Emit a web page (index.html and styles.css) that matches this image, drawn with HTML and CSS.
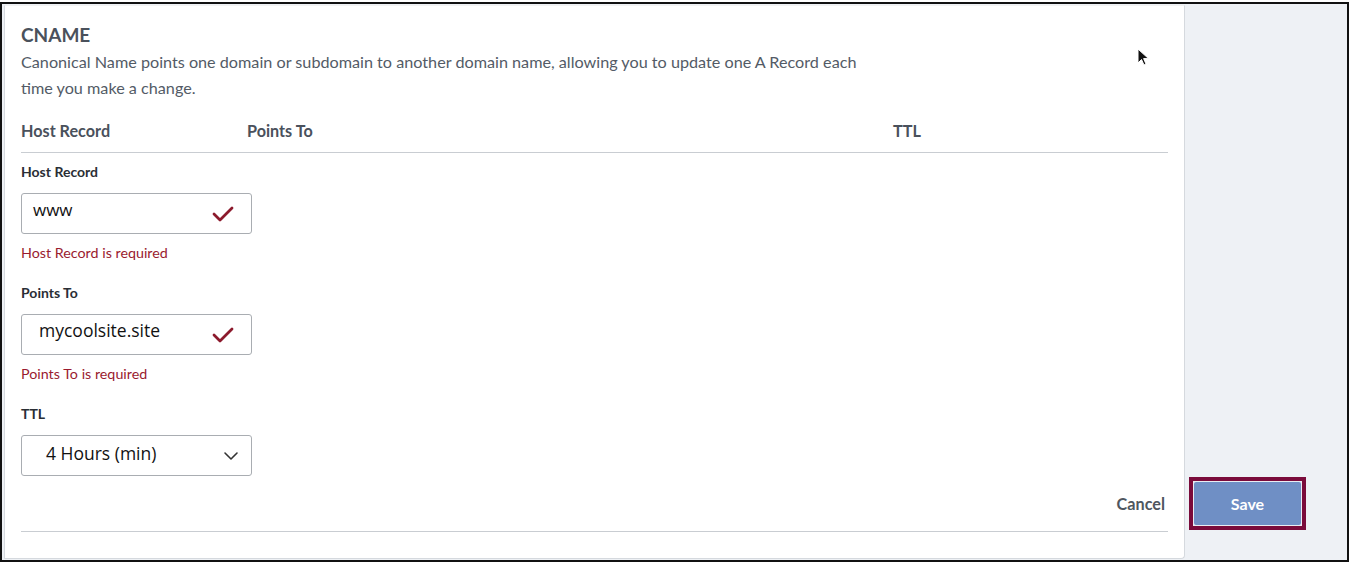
FILE: index.html
```html
<!DOCTYPE html>
<html>
<head>
<meta charset="utf-8">
<link rel="stylesheet" href="styles.css">
</head>
<body>
<div class="frame">
  <div class="card">
    <h1 class="title">CNAME</h1>
    <p class="desc">Canonical Name points one domain or subdomain to another domain name, allowing you to update one A Record each time you make a change.</p>
    <div class="thead">
      <span class="col-host">Host Record</span>
      <span class="col-points">Points To</span>
      <span class="col-ttl">TTL</span>
    </div>
    <div class="form">
      <label class="label first">Host Record</label>
      <div class="input">
        <span class="value value-www">www</span>
        <svg class="check" width="22" height="18" viewBox="0 0 22 18"><path d="M2 9 L8 15 L20 3" fill="none" stroke="#8c1a2c" stroke-width="2.8" stroke-linecap="round" stroke-linejoin="round"/></svg>
      </div>
      <div class="error">Host Record is required</div>
      <label class="label">Points To</label>
      <div class="input">
        <span class="value value-site">mycoolsite.site</span>
        <svg class="check" width="22" height="18" viewBox="0 0 22 18"><path d="M2 9 L8 15 L20 3" fill="none" stroke="#8c1a2c" stroke-width="2.8" stroke-linecap="round" stroke-linejoin="round"/></svg>
      </div>
      <div class="error">Points To is required</div>
      <label class="label">TTL</label>
      <div class="input select">
        <span class="value value-ttl">4 Hours (min)</span>
        <svg class="chev" width="16" height="10" viewBox="0 0 16 10"><path d="M2 2 L8 8 L14 2" fill="none" stroke="#333" stroke-width="1.6" stroke-linecap="round" stroke-linejoin="round"/></svg>
      </div>
    </div>
    <div class="footer">
      <span class="cancel">Cancel</span>
      <span class="save-ring"><span class="save">Save</span></span>
    </div>
    <div class="bottom-rule"></div>
    <svg class="cursor" width="14" height="20" viewBox="0 0 14 20"><path d="M1 1 L1 15 L4.5 11.5 L7 17 L9 16 L6.6 10.6 L11.5 10.6 Z" fill="#111" stroke="#fff" stroke-width="1"/></svg>
  </div>
</div>
</body>
</html>
```

FILE: styles.css
```css
* { box-sizing: border-box; }
html, body { margin: 0; padding: 0; background: #ffffff; }
body { font-family: Lato, "Open Sans", sans-serif; }

.frame {
  margin-top: 2px;
  width: 1349px;
  height: 560px;
  border: 2px solid #111;
  background: #eef1f5;
  padding: 1px 0 0 2px;
  display: flex;
  align-items: flex-start;
}

.card {
  position: relative;
  width: 1181px;
  height: 554px;
  background: #fff;
  border: 1px solid #d5d9de;
  border-top-color: #f2f2f2;
  border-radius: 0 0 4px 0;
  padding: 17px 16px 0 16px;
}

.title {
  margin: 0;
  font-size: 19px;
  line-height: 24px;
  font-weight: 700;
  color: #4a515c;
}

.desc {
  margin: 2px 0 0 0;
  width: 850px;
  font-size: 16.2px;
  line-height: 26px;
  color: #535b66;
}

.thead {
  margin-top: 20px;
  display: flex;
  font-size: 16.2px;
  line-height: 20px;
  font-weight: 700;
  color: #4a515c;
  padding-bottom: 11px;
  border-bottom: 1px solid #c9cdd2;
}
.col-host { width: 226px; }
.col-points { width: 646px; }
.col-ttl { flex: 1; }

.form { display: flex; flex-direction: column; align-items: flex-start; }

.label {
  display: block;
  margin-top: 22px;
  font-size: 14px;
  line-height: 18px;
  font-weight: 700;
  color: #2a2e35;
}
.label.first { margin-top: 10px; }

.input {
  margin-top: 12px;
  width: 231px;
  height: 41px;
  border: 1px solid #a9adb2;
  border-radius: 3px;
  display: flex;
  align-items: center;
  position: relative;
  font-family: "Open Sans", "Noto Sans", sans-serif;
  color: #111;
}
.value { font-size: 17.5px; }
.value-www { padding-left: 11px; margin-top: -8px; font-size: 17px; }
.value-site { padding-left: 17px; margin-top: -10px; }
.value-ttl { padding-left: 24px; margin-top: -6px; }

.check { position: absolute; left: 190px; top: 11px; }
.chev { position: absolute; left: 201px; top: 15px; }

.error {
  margin-top: 10px;
  font-size: 14.3px;
  line-height: 18px;
  color: #9a1b2f;
}

.footer {
  margin-top: 1px;
  margin-right: -138px;
  height: 52px;
  display: flex;
  justify-content: flex-end;
  align-items: center;
}
.cancel {
  font-size: 16.2px;
  font-weight: 700;
  color: #4f5660;
  margin-right: 24px;
}
.save-ring {
  width: 117px;
  height: 53px;
  border: 4px solid #7a0b3b;
  padding: 1px;
  background: #e9edf3;
  display: flex;
}
.save {
  flex: 1;
  background: #6f8fc5;
  border-radius: 2px;
  color: #fff;
  font-size: 16px;
  font-weight: 700;
  display: flex;
  align-items: center;
  justify-content: center;
}

.bottom-rule {
  margin-top: 2px;
  border-top: 1px solid #c9cdd2;
}

.cursor { position: absolute; left: 1132px; top: 42px; }
```
